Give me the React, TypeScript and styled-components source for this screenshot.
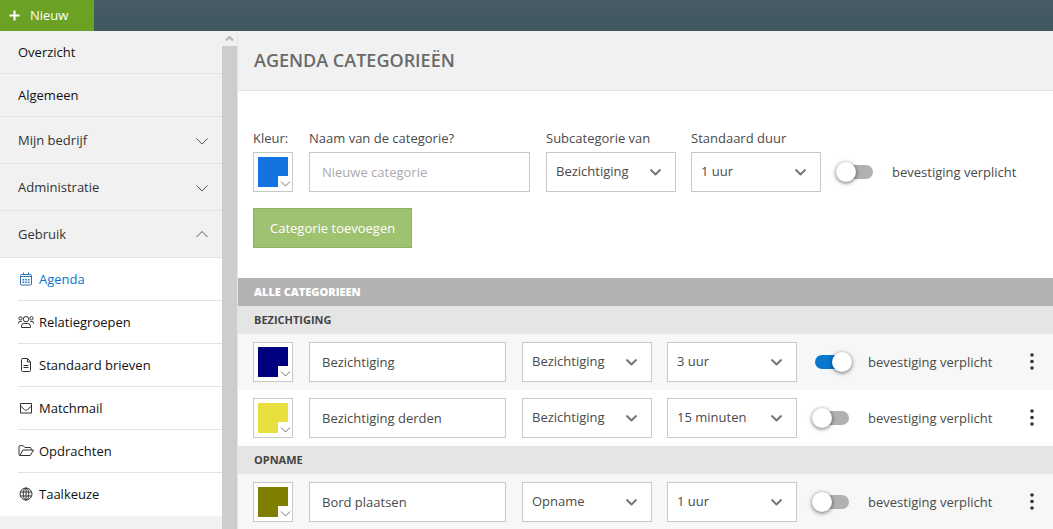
import React, { useState } from "react";
import styled, { createGlobalStyle } from "styled-components";

const GlobalStyle = createGlobalStyle`
  *, *::before, *::after { box-sizing: border-box; }
  body { margin: 0; background: #fff; }
  body, button, input, select {
    font-family: "Open Sans", "Noto Sans", sans-serif;
    font-size: 13px;
    line-height: 18px;
    color: #4a4a4a;
  }
`;

const Shell = styled.div`
  display: flex;
  flex-direction: column;
  height: 100vh;
`;

const TopBar = styled.header`
  display: flex;
  flex: none;
  height: 31px;
  background: linear-gradient(#485c69, #40575c);
`;

const NewButton = styled.button`
  display: flex;
  align-items: center;
  gap: 10px;
  width: 94px;
  padding: 0 0 1px 9px;
  border: 0;
  background: #6ca224;
  color: #fff;
  font-weight: 500;
  cursor: pointer;
`;

const Body = styled.div`
  display: flex;
  flex: 1;
  min-height: 0;
`;

const Sidebar = styled.aside`
  display: flex;
  flex: none;
  width: 238px;
  border-right: 1px solid #e4e4e4;
  background: #f1f1f1;
`;

const Nav = styled.nav`
  flex: 1;
  overflow: hidden;
`;

const NavLink = styled.a`
  display: flex;
  align-items: center;
  height: 43px;
  padding: 0 18px;
  border-bottom: 1px solid #e2e2e2;
  color: #111;
  text-decoration: none;
`;

const NavGroup = styled.button`
  display: flex;
  align-items: center;
  justify-content: space-between;
  width: 100%;
  height: 47px;
  padding: 0 14px 0 18px;
  border: 0;
  border-bottom: 1px solid #e2e2e2;
  background: none;
  color: #333;
  cursor: pointer;
`;

const SubList = styled.ul`
  margin: 0;
  padding: 0 0 0 18px;
  list-style: none;
  background: #fff;
`;

const SubItem = styled.li`
  height: 43px;
  border-bottom: 1px solid #e2e2e2;
  &:last-child { border-bottom-color: transparent; }
`;

const SubLink = styled.a<{ $active?: boolean }>`
  display: flex;
  align-items: center;
  gap: 5px;
  height: 100%;
  color: ${(p) => (p.$active ? "#0b74cc" : "#111")};
  text-decoration: none;

  svg { color: ${(p) => (p.$active ? "#2a6fb5" : "#333")}; }
`;

const ScrollRail = styled.div`
  display: flex;
  flex-direction: column;
  flex: none;
  width: 15px;
`;

const ScrollArrow = styled.div`
  display: flex;
  align-items: center;
  justify-content: center;
  height: 15px;
`;

const ScrollThumb = styled.div`
  flex: 1;
  background: #cdcdcd;
`;

const Main = styled.main`
  flex: 1;
  min-width: 0;
  overflow-y: auto;
  scrollbar-width: none;
`;

const PageHeader = styled.div`
  display: flex;
  align-items: center;
  height: 60px;
  padding: 0 16px 2px;
  border-bottom: 1px solid #e4e4e4;
  background: #f1f1f1;
`;

const PageTitle = styled.h1`
  margin: 0;
  font-size: 18px;
  line-height: 24px;
  font-weight: 600;
  color: #6a6a6a;
`;

const AddForm = styled.form`
  padding: 38px 36px 30px 15px;
`;

const FieldRow = styled.div`
  display: flex;
  align-items: flex-end;
  gap: 16px;
`;

const Field = styled.label<{ $grow?: boolean }>`
  display: flex;
  flex-direction: column;
  gap: 5px;
  flex: ${(p) => (p.$grow ? "1" : "none")};
  width: ${(p) => (p.$grow ? "auto" : "min-content")};
  min-width: 0;
  white-space: nowrap;
`;

const Pair = styled.div`
  display: flex;
  flex: none;
  gap: 15px;
`;

const SwatchBox = styled.span`
  position: relative;
  display: block;
  flex: none;
  width: 40px;
  height: 40px;
`;

const SwatchInput = styled.input`
  appearance: none;
  display: block;
  width: 40px;
  height: 40px;
  padding: 4px;
  border: 1px solid #c8c8c8;
  background: #fff;
  cursor: pointer;

  &::-webkit-color-swatch-wrapper { padding: 0; }
  &::-webkit-color-swatch { border: 0; border-radius: 0; }
`;

const SwatchNotch = styled.span`
  position: absolute;
  right: 2px;
  bottom: 2px;
  display: flex;
  align-items: center;
  justify-content: flex-end;
  width: 13px;
  height: 14px;
  background: #fff;
  pointer-events: none;
`;

const TextInput = styled.input`
  flex: 1 1 auto;
  width: 100%;
  min-width: 0;
  height: 40px;
  padding: 0 12px;
  border: 1px solid #c8c8c8;
  border-radius: 0;
  background: #fff;

  &::placeholder { color: #aaa; opacity: 1; }
`;

const SelectBox = styled.span`
  position: relative;
  display: block;
  width: 130px;

  svg {
    position: absolute;
    top: 14px;
    right: 14px;
    pointer-events: none;
  }
`;

const SelectInput = styled.select`
  appearance: none;
  display: block;
  width: 100%;
  height: 40px;
  padding: 0 32px 2px 9px;
  border: 1px solid #c8c8c8;
  border-radius: 0;
  background: #fff;
`;

const SwitchLabel = styled.label`
  display: flex;
  align-items: center;
  flex: none;
  gap: 19px;
  width: 180px;
  height: 40px;
  padding-left: 2px;
  white-space: nowrap;
  cursor: pointer;
`;

const SwitchInput = styled.input`
  appearance: none;
  position: relative;
  flex: none;
  width: 34px;
  height: 14px;
  margin: 0;
  border-radius: 7px;
  background: #b1b1b1;
  cursor: pointer;

  &::before {
    content: "";
    position: absolute;
    top: -3px;
    left: -3px;
    width: 20px;
    height: 20px;
    border-radius: 50%;
    background: #fff;
    box-shadow: 0 1px 4px rgba(0, 0, 0, 0.6);
  }
  &:checked { background: #0878d0; }
  &:checked::before { left: 17px; }
`;

const SubmitButton = styled.button`
  height: 40px;
  margin-top: 16px;
  padding: 0 16px;
  border: 1px solid #8fb163;
  background: #9fc270;
  color: #fff;
  font-weight: 500;
  cursor: pointer;
`;

const ListTitle = styled.h2`
  margin: 0;
  padding: 5px 16px;
  background: #b2b2b2;
  color: #fff;
  font-size: 11px;
  line-height: 18px;
  font-weight: 800;
`;

const GroupTitle = styled.h3`
  margin: 0;
  padding: 5px 16px;
  background: #e5e5e5;
  color: #444;
  font-size: 11px;
  line-height: 18px;
  font-weight: 700;
`;

const CategoryRow = styled.div<{ $shaded: boolean }>`
  display: flex;
  align-items: center;
  gap: 16px;
  padding: 8px 9px 8px 15px;
  background: ${(p) => (p.$shaded ? "#f7f7f7" : "#fff")};
`;

const MoreButton = styled.button`
  display: flex;
  align-items: center;
  justify-content: center;
  flex: none;
  width: 24px;
  height: 32px;
  margin-left: 11px;
  padding: 0;
  border: 0;
  background: none;
  cursor: pointer;
`;

const Stroke = ({ w, h, d, width = 1, color = "currentColor" }: {
  w: number; h: number; d: string; width?: number; color?: string;
}) => (
  <svg width={w} height={h} viewBox={`0 0 ${w} ${h}`} fill="none" stroke={color}
    strokeWidth={width} strokeLinejoin="round" aria-hidden="true">
    <path d={d} />
  </svg>
);

const icons: Record<string, React.ReactNode> = {
  calendar: (
    <>
      <path d="M3.500 3.500h9a1 1 0 0 1 1 1v8.500a1 1 0 0 1-1 1h-9a1 1 0 0 1-1-1V4.500a1 1 0 0 1 1-1zM2.500 5.500h11M5.500 1.500v2M10.500 1.500v2" />
      <path d="M4.500 8.800h1.600M7.200 8.800h1.600M9.900 8.800h1.600M4.500 11.200h1.600M7.200 11.200h1.600M9.900 11.200h1.600" strokeWidth="1.400" />
    </>
  ),
  users: (
    <>
      <circle cx="8" cy="5.200" r="2.700" />
      <circle cx="2.500" cy="4.300" r="1.600" />
      <circle cx="13.500" cy="4.300" r="1.600" />
      <path d="M3.500 13.500v-1.400a2.600 2.600 0 0 1 2.600-2.600h3.800a2.600 2.600 0 0 1 2.600 2.600v1.400zM.5 9.500v-.6a1.600 1.600 0 0 1 1.600-1.500h1.700M15.500 9.500v-.6a1.600 1.600 0 0 0-1.600-1.500h-1.700" />
    </>
  ),
  file: (
    <path d="M4 1.500h5.500l3 3.200v8.800a1 1 0 0 1-1 1H4.500a1 1 0 0 1-1-1v-11a1 1 0 0 1 1-1M9.500 1.500v3.500h3M5.500 8.500h5M5.500 10.500h5" />
  ),
  mail: (
    <path d="M3 3.500h10.500v9.500H2.500V3.500H3M2.500 6l4 3.600c1 .8 2 .8 3 0l4-3.600" />
  ),
  folder: (
    <path d="M2 12.500h10.200l3.300-5.500H4.900L2 12.500a1 1 0 0 1-1-1v-8a.8.8 0 0 1 .8-.8h3.400l1.700 1.800h5.300a1 1 0 0 1 1 1V7" />
  ),
  globe: (
    <>
      <circle cx="8" cy="8" r="6" />
      <ellipse cx="8" cy="8" rx="2.800" ry="6" />
      <path d="M2.500 6h11M2.500 10h11M8 2v12" />
    </>
  ),
};

const Icon = ({ name }: { name: string }) => (
  <svg width="16" height="16" viewBox="0 0 16 16" fill="none" stroke="currentColor"
    strokeLinejoin="round" aria-hidden="true">
    {icons[name]}
  </svg>
);

const subItems = [
  { icon: "calendar", label: "Agenda", active: true },
  { icon: "users", label: "Relatiegroepen" },
  { icon: "file", label: "Standaard brieven" },
  { icon: "mail", label: "Matchmail" },
  { icon: "folder", label: "Opdrachten" },
  { icon: "globe", label: "Taalkeuze" },
];

const groups = [
  {
    title: "BEZICHTIGING",
    rows: [
      { color: "#000080", name: "Bezichtiging", sub: "Bezichtiging", duration: "3 uur", required: true },
      { color: "#e8df3f", name: "Bezichtiging derden", sub: "Bezichtiging", duration: "15 minuten", required: false },
    ],
  },
  {
    title: "OPNAME",
    rows: [
      { color: "#808000", name: "Bord plaatsen", sub: "Opname", duration: "1 uur", required: false },
    ],
  },
];

const ColorPicker = ({ value, label }: { value: string; label?: string }) => (
  <SwatchBox>
    <SwatchInput type="color" defaultValue={value} aria-label={label} />
    <SwatchNotch>
      <Stroke w={11} h={8} d="M1 2.500l4.500 4.500 4.500-4.500" color="#777" />
    </SwatchNotch>
  </SwatchBox>
);

const Select = ({ value, options, label }: { value: string; options: string[]; label?: string }) => (
  <SelectBox>
    <SelectInput defaultValue={value} aria-label={label}>
      {options.map((o) => <option key={o}>{o}</option>)}
    </SelectInput>
    <Stroke w={13} h={12} d="M1.500 3.500l5 5 5-5" width={2} color="#777" />
  </SelectBox>
);

const Switch = ({ on }: { on: boolean }) => (
  <SwitchLabel>
    <SwitchInput type="checkbox" defaultChecked={on} />
    bevestiging verplicht
  </SwitchLabel>
);

const subcategories = ["Bezichtiging", "Opname"];
const durations = ["15 minuten", "1 uur", "3 uur"];

const arrowDown = "M.5 2.500L6 8 11.500 2.500";
const arrowUp = "M.5 7L6 1.500 11.500 7";

export default function App() {
  const [open, setOpen] = useState(true);
  return (
    <Shell>
      <GlobalStyle />
      <TopBar>
        <NewButton type="button">
          <Stroke w={11} h={11} d="M5.500 .5v10M.5 5.500h10" width={2} />
          Nieuw
        </NewButton>
      </TopBar>
      <Body>
        <Sidebar>
          <Nav>
            <NavLink href="#overzicht">Overzicht</NavLink>
            <NavLink href="#algemeen">Algemeen</NavLink>
            {["Mijn bedrijf", "Administratie"].map((label) => (
              <NavGroup key={label} type="button" aria-expanded="false">
                {label}
                <Stroke w={12} h={8} d={arrowDown} color="#555" />
              </NavGroup>
            ))}
            <NavGroup type="button" aria-expanded={open} onClick={() => setOpen(!open)}>
              Gebruik
              <Stroke w={12} h={8} d={open ? arrowUp : arrowDown} color="#555" />
            </NavGroup>
            {open && (
              <SubList>
                {subItems.map((item) => (
                  <SubItem key={item.label}>
                    <SubLink href={`#${item.icon}`} $active={item.active}>
                      <Icon name={item.icon} />
                      {item.label}
                    </SubLink>
                  </SubItem>
                ))}
              </SubList>
            )}
          </Nav>
          <ScrollRail aria-hidden="true">
            <ScrollArrow>
              <Stroke w={9} h={7} d="M1 5.500l3.500-3.500 3.500 3.500" width={2} color="#b5b5b5" />
            </ScrollArrow>
            <ScrollThumb />
          </ScrollRail>
        </Sidebar>
        <Main>
          <PageHeader>
            <PageTitle>AGENDA CATEGORIEËN</PageTitle>
          </PageHeader>
          <AddForm onSubmit={(e) => e.preventDefault()}>
            <FieldRow>
              <Field>
                Kleur:
                <ColorPicker value="#1373e0" />
              </Field>
              <Field $grow>
                Naam van de categorie?
                <TextInput placeholder="Nieuwe categorie" />
              </Field>
              <Pair>
                <Field>
                  Subcategorie van
                  <Select value="Bezichtiging" options={subcategories} />
                </Field>
                <Field>
                  Standaard duur
                  <Select value="1 uur" options={durations} />
                </Field>
              </Pair>
              <Switch on={false} />
            </FieldRow>
            <SubmitButton type="submit">Categorie toevoegen</SubmitButton>
          </AddForm>
          <ListTitle>ALLE CATEGORIEEN</ListTitle>
          {groups.map((group) => (
            <section key={group.title}>
              <GroupTitle>{group.title}</GroupTitle>
              {group.rows.map((row, i) => (
                <CategoryRow key={row.name} $shaded={i % 2 === 0}>
                  <ColorPicker value={row.color} label="Kleur" />
                  <TextInput defaultValue={row.name} aria-label="Naam van de categorie" />
                  <Pair>
                    <Select value={row.sub} options={subcategories} label="Subcategorie van" />
                    <Select value={row.duration} options={durations} label="Standaard duur" />
                  </Pair>
                  <Switch on={row.required} />
                  <MoreButton type="button" aria-label="Meer opties">
                    <svg width="4" height="18" viewBox="0 0 4 18" fill="#333" aria-hidden="true">
                      <circle cx="2" cy="2" r="1.800" />
                      <circle cx="2" cy="8.500" r="1.800" />
                      <circle cx="2" cy="15" r="1.800" />
                    </svg>
                  </MoreButton>
                </CategoryRow>
              ))}
            </section>
          ))}
        </Main>
      </Body>
    </Shell>
  );
}
